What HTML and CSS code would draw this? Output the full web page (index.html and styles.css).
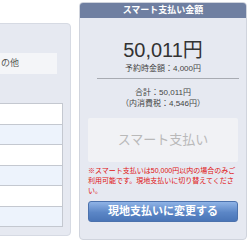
FILE: index.html
```html
<!DOCTYPE html>
<html lang="ja">
<head>
<meta charset="utf-8">
<link rel="stylesheet" href="styles.css">
</head>
<body>
<div class="page">
  <div class="left-panel">
    <div class="other-box">の他</div>
    <div class="rows">
      <div class="row"></div>
      <div class="row alt"></div>
      <div class="row"></div>
      <div class="row alt"></div>
      <div class="row"></div>
      <div class="row alt"></div>
    </div>
  </div>
  <div class="pay-panel">
    <div class="pay-head">スマート支払い金額</div>
    <div class="amount">50,011円</div>
    <div class="reserve">予約時金額：4,000円</div>
    <div class="divider"></div>
    <div class="total">合計：50,011円<br>（内消費税：4,546円）</div>
    <div class="smart-btn">スマート支払い</div>
    <p class="note">※スマート支払いは50,000円以内の場合のみご利用可能です。現地支払いに切り替えてください。</p>
    <div class="switch-btn">現地支払いに変更する</div>
  </div>
</div>
</body>
</html>
```
FILE: styles.css
```css
html, body {
  margin: 0;
  padding: 0;
  background: #ffffff;
}
body {
  font-family: "Liberation Sans", "Noto Sans CJK JP", sans-serif;
  color: #333333;
  overflow: hidden;
  width: 250px;
  height: 247px;
}
.page {
  display: flex;
  align-items: flex-start;
  padding-top: 2px;
}
.left-panel {
  box-sizing: border-box;
  margin-left: -30px;
  margin-top: 21px;
  width: 101px;
  height: 213px;
  background: #e6e9f1;
  border: 1px solid #d6dae3;
  border-radius: 0 4px 4px 0;
  padding-top: 29px;
}
.other-box {
  margin-left: 10px;
  margin-right: 13px;
  height: 21px;
  line-height: 21px;
  padding-left: 20px;
  font-size: 9px;
  color: #555555;
  background: #f4f5f8;
}
.rows {
  margin-top: 29px;
  margin-left: 10px;
  margin-right: 7px;
  border: 1px solid #c4c8d0;
  border-bottom: none;
  background: #ffffff;
}
.row {
  height: 19.5px;
  border-bottom: 1px solid #c4c8d0;
  background: #ffffff;
}
.row.alt {
  background: #edf3fc;
}
.pay-panel {
  box-sizing: border-box;
  margin-left: 8px;
  width: 168px;
  height: 238px;
  background: #e6e9f1;
  border: 1px solid #d0d4dd;
  border-radius: 4px;
  overflow: hidden;
  display: flex;
  flex-direction: column;
  align-items: center;
}
.pay-head {
  align-self: stretch;
  height: 15px;
  line-height: 15px;
  background: #6f7fa1;
  color: #ffffff;
  font-size: 9px;
  font-weight: bold;
  text-align: center;
}
.amount {
  margin-top: 20px;
  font-size: 20px;
  line-height: 24px;
  color: #333333;
}
.reserve {
  margin-top: 2px;
  font-size: 8px;
  line-height: 10px;
  color: #444444;
}
.divider {
  align-self: stretch;
  margin: 4px 7px 0 17px;
  height: 1px;
  background: #a8abb2;
}
.total {
  margin-top: 8px;
  font-size: 8px;
  line-height: 11px;
  color: #444444;
  text-align: center;
}
.smart-btn {
  margin-top: 9px;
  width: 150px;
  height: 44px;
  line-height: 44px;
  background: #f1f2f5;
  border-radius: 2px;
  color: #b9b9b9;
  font-size: 13px;
  text-align: center;
}
.note {
  margin: 4px 0 0 0;
  width: 150px;
  font-size: 7px;
  line-height: 10px;
  color: #e01010;
  text-align: left;
}
.switch-btn {
  box-sizing: border-box;
  margin-top: 5px;
  width: 150px;
  height: 21px;
  line-height: 19px;
  border: 1px solid #4c72ad;
  border-radius: 3px;
  background: linear-gradient(#8fb3e6, #5b86c6 55%, #4a75b7);
  color: #ffffff;
  font-size: 11px;
  font-weight: bold;
  text-align: center;
}
```
